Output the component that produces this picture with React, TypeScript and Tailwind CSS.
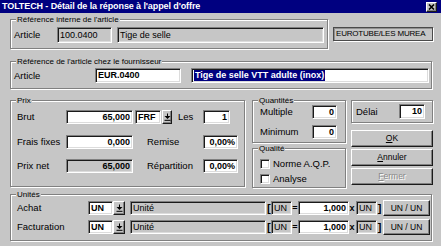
import type { ReactNode } from 'react'

// Win 3.x style bevels
const sunken =
  'border border-t-[#808080] border-l-[#808080] border-r-white border-b-white shadow-[inset_1px_1px_0_#1a1a1a,inset_-1px_-1px_0_#dcdcdc]'
const raised =
  'border border-t-white border-l-white border-r-[#1a1a1a] border-b-[#1a1a1a] shadow-[inset_-1px_-1px_0_#808080]'
const etched = 'border border-[#808080] shadow-[inset_1px_1px_0_#fff,1px_1px_0_#fff]'

function Group({ title, className = '', children }: { title: string; className?: string; children: ReactNode }) {
  return (
    <fieldset className={`${etched} min-w-0 ${className}`}>
      <legend className="ml-[5px] px-[1px] bg-[#c6c6c6] text-[8px] leading-[9px]">{title}</legend>
      {children}
    </fieldset>
  )
}

function Field({
  value,
  className = '',
  white = false,
  bold = false,
  right = false,
}: {
  value: ReactNode
  className?: string
  white?: boolean
  bold?: boolean
  right?: boolean
}) {
  return (
    <div
      className={`${sunken} h-full shrink-0 flex items-center px-[2px] text-[9px] leading-none whitespace-nowrap overflow-hidden ${
        white ? 'bg-white' : ''
      } ${bold ? 'font-bold' : ''} ${right ? 'justify-end' : ''} ${className}`}
    >
      {value}
    </div>
  )
}

function DropButton({ className = '' }: { className?: string }) {
  return (
    <div className={`${raised} h-full shrink-0 bg-[#c6c6c6] flex items-center justify-center ${className}`}>
      <svg width="7" height="8" viewBox="0 0 7 8">
        <rect x="3" y="0.5" width="1" height="2.5" fill="#000" />
        <polygon points="0.5,3 6.5,3 3.5,6" fill="#000" />
        <rect x="0.5" y="6.8" width="6" height="1" fill="#000" />
      </svg>
    </div>
  )
}

function Check({ label }: { label: string }) {
  return (
    <div className="flex items-center h-[12px] gap-[3px]">
      <div className={`${sunken} w-[10px] h-[10px] bg-white`} />
      <span className="text-[9.5px] leading-none">{label}</span>
    </div>
  )
}

function Label({ children, className = '' }: { children: ReactNode; className?: string }) {
  return <span className={`shrink-0 text-[9.5px] leading-none ${className}`}>{children}</span>
}

function UnitRow({ label, className = '' }: { label: string; className?: string }) {
  return (
    <div className={`flex items-center h-[14px] pl-[6px] ${className}`}>
      <Label className="w-[71px]">{label}</Label>
      <Field value="UN" white bold className="w-[25px]" />
      <DropButton className="w-[12px]" />
      <Field value="Unité" className="w-[136px] ml-[5px]" />
      <span className="w-[4px] ml-[1px] text-[11px] font-bold leading-none">[</span>
      <Field value="UN" className="w-[21px]" />
      <span className="w-[6px] text-center text-[9px] font-bold leading-none">=</span>
      <Field value="1,000" white bold right className="w-[51px]" />
      <span className="w-[6px] text-center text-[9px] font-bold leading-none">x</span>
      <Field value="UN" className="w-[21px] ml-[1px]" />
      <span className="w-[5px] text-center text-[11px] font-bold leading-none">]</span>
      <div className={`${raised} w-[47px] h-[16px] ml-[1px] flex items-center justify-center text-[8.5px] leading-none`}>
        UN / UN
      </div>
    </div>
  )
}

export default function App() {
  return (
    <div className="w-[441px] h-[246px] overflow-hidden bg-[#c6c6c6] text-black font-['Liberation_Sans',Arial,sans-serif]">
      {/* Title bar */}
      <div className="h-[13px] bg-[#000080] flex items-center justify-between pl-[2px] pr-[4px]">
        <span className="text-white font-bold text-[9px] leading-none whitespace-nowrap tracking-[-0.1px]">
          TOLTECH - Détail de la réponse à l'appel d'offre
        </span>
        <div className={`${raised} w-[11px] h-[10px] bg-[#c6c6c6] flex items-center justify-center`}>
          <svg width="7" height="6" viewBox="0 0 7 6">
            <path d="M1 0.5 L6 5.5 M6 0.5 L1 5.5" stroke="#000" strokeWidth="1.6" />
          </svg>
        </div>
      </div>

      <div className="pl-[10px]">
        {/* Internal reference */}
        <div className="mt-[2px] flex items-start">
          <Group title="Référence interne de l'article" className="w-[318px] h-[34px]">
            <div className="flex items-center h-[16px] mt-[3px] pl-[3px]">
              <Label className="w-[43px]">Article</Label>
              <Field value="100.0400" className="w-[55px]" />
              <Field value="Tige de selle" className="w-[207px] ml-[5px]" />
            </div>
          </Group>
          <div className="ml-[5px] mt-[12px] w-[100px] h-[14px] border border-[#4a4a4a] shadow-[inset_1px_1px_0_#909090,1px_1px_0_#fff] flex items-center pl-[2px] text-[8px] tracking-[-0.2px] leading-none whitespace-nowrap overflow-hidden">
            EUROTUBE/LES MUREA
          </div>
        </div>

        {/* Supplier reference */}
        <Group title="Référence de l'article chez le fournisseur" className="mt-[8px] w-[422px] h-[32px]">
          <div className="flex items-center h-[15px] mt-[2px] pl-[3px]">
            <Label className="w-[81px]">Article</Label>
            <Field value="EUR.0400" white bold className="w-[86px]" />
            <Field
              value={<span className="bg-[#000080] text-white px-[1px] py-[1px]">Tige de selle VTT adulte (inox)</span>}
              white
              bold
              className="w-[238px] ml-[10px]"
            />
          </div>
        </Group>

        {/* Price / quantities / actions */}
        <div className="mt-[7px] flex items-start h-[92px]">
          <Group title="Prix" className="w-[235px] h-[91px]">
            <div className="pl-[6px] pt-[5px]">
              <div className="flex items-center h-[14px]">
                <Label className="w-[49px]">Brut</Label>
                <Field value="65,000" white bold right className="w-[67px]" />
                <Field value="FRF" white bold className="w-[26px] ml-[2px]" />
                <DropButton className="w-[10px] ml-[1px]" />
                <Label className="w-[25px] ml-[6px]">Les</Label>
                <Field value="1" white bold right className="w-[27px]" />
              </div>
              <div className="flex items-center h-[14px] mt-[11px]">
                <Label className="w-[49px]">Frais fixes</Label>
                <Field value="0,000" white bold right className="w-[67px]" />
                <Label className="w-[56px] ml-[14px]">Remise</Label>
                <Field value="0,00%" white bold right className="w-[35px]" />
              </div>
              <div className="flex items-center h-[14px] mt-[10px]">
                <Label className="w-[49px]">Prix net</Label>
                <Field value="65,000" bold right className="w-[67px]" />
                <Label className="w-[56px] ml-[14px]">Répartition</Label>
                <Field value="0,00%" white bold right className="w-[35px]" />
              </div>
            </div>
          </Group>

          <div className="ml-[7px] w-[94px] flex flex-col">
            <Group title="Quantités" className="w-[94px] h-[47px]">
              <div className="pl-[7px]">
                <div className="flex items-center h-[14px]">
                  <Label className="w-[52px]">Multiple</Label>
                  <Field value="0" white bold right className="w-[25px]" />
                </div>
                <div className="flex items-center h-[14px] mt-[6px]">
                  <Label className="w-[52px]">Minimum</Label>
                  <Field value="0" white bold right className="w-[25px]" />
                </div>
              </div>
            </Group>
            <Group title="Qualité" className="w-[94px] h-[44px] mt-[1px]">
              <div className="pl-[7px] pt-[5px] flex flex-col gap-[3px]">
                <Check label="Norme A.Q.P." />
                <Check label="Analyse" />
              </div>
            </Group>
          </div>

          <div className="ml-[5px] w-[82px] flex flex-col">
            <div className={`${etched} mt-[4px] h-[23px] flex items-center pl-[4px]`}>
              <Label className="w-[43px]">Délai</Label>
              <Field value="10" white bold right className="w-[26px] !h-[15px]" />
            </div>
            <div className={`${raised} mt-[7px] h-[17px] flex items-center justify-center text-[8.5px] leading-none`}>
              <span>
                <span className="underline">O</span>K
              </span>
            </div>
            <div className={`${raised} mt-[2px] h-[17px] flex items-center justify-center text-[8.5px] leading-none`}>
              <span>
                <span className="underline">A</span>nnuler
              </span>
            </div>
            <div
              className={`${raised} mt-[2px] h-[17px] flex items-center justify-center text-[8.5px] leading-none text-[#8a8a8a] [text-shadow:1px_1px_0_#fff]`}
            >
              <span>
                <span className="underline">F</span>ermer
              </span>
            </div>
          </div>
        </div>

        {/* Units */}
        <Group title="Unités" className="mt-[2px] w-[422px] h-[51px]">
          <UnitRow label="Achat" className="mt-[2px]" />
          <UnitRow label="Facturation" className="mt-[5px]" />
        </Group>
      </div>
    </div>
  )
}
